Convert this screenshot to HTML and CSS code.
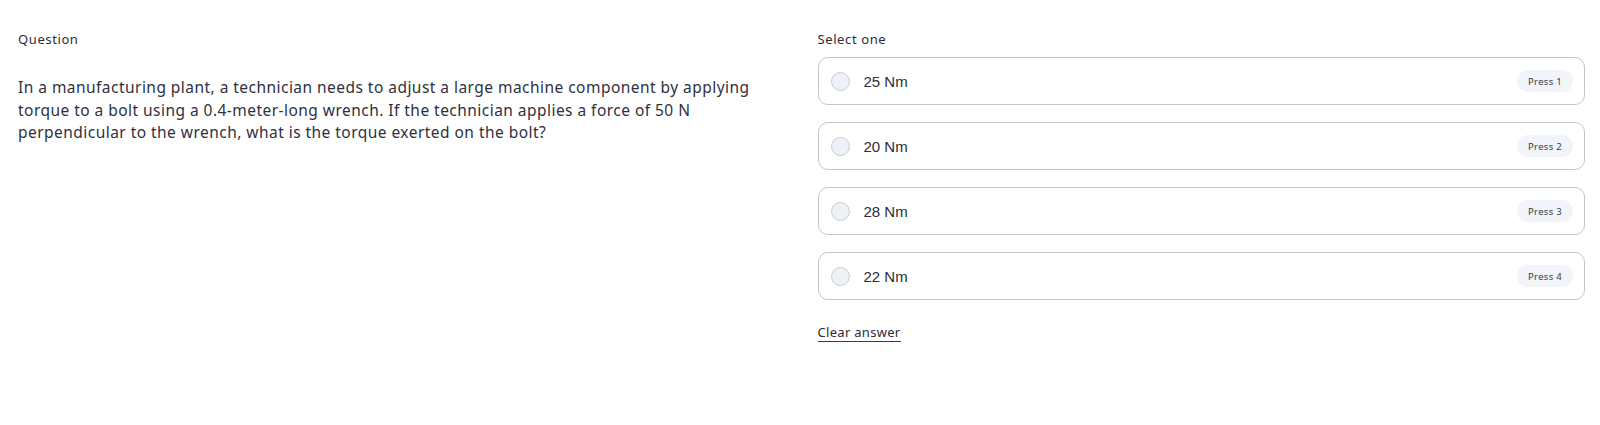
FILE: index.html
```html
<!DOCTYPE html>
<html lang="en">
<head>
<meta charset="utf-8">
<title>Question</title>
<link rel="stylesheet" href="styles.css">
</head>
<body>
<main class="layout">
  <section class="question">
    <div class="label">Question</div>
    <p class="prompt">In a manufacturing plant, a technician needs to adjust a large machine component by applying torque to a bolt using a 0.4-meter-long wrench. If the technician applies a force of 50 N perpendicular to the wrench, what is the torque exerted on the bolt?</p>
  </section>
  <section class="answers">
    <div class="label">Select one</div>
    <div class="options">
      <label class="option"><span class="radio"></span><span class="option-text">25 Nm</span><span class="badge">Press 1</span></label>
      <label class="option"><span class="radio"></span><span class="option-text">20 Nm</span><span class="badge">Press 2</span></label>
      <label class="option"><span class="radio"></span><span class="option-text">28 Nm</span><span class="badge">Press 3</span></label>
      <label class="option"><span class="radio"></span><span class="option-text">22 Nm</span><span class="badge">Press 4</span></label>
    </div>
    <div class="clear-row"><span class="clear">Clear answer</span></div>
  </section>
</main>
</body>
</html>
```
FILE: styles.css
```css
html, body {
  margin: 0;
  padding: 0;
  background: #ffffff;
}
body {
  font-family: "Noto Sans", "Open Sans", sans-serif;
  color: #2b2d3a;
}
.layout {
  display: grid;
  grid-template-columns: 1fr 1fr;
  column-gap: 32px;
  padding: 29px 15px 0 18px;
}
.label {
  font-size: 13px;
  line-height: 20px;
  letter-spacing: 0.6px;
  color: #2b2d3a;
}
.prompt {
  margin: 27px 0 0 0;
  font-size: 15.5px;
  line-height: 22.5px;
  letter-spacing: 0.46px;
  color: #2f3140;
}
.options {
  margin-top: 8px;
  display: flex;
  flex-direction: column;
  gap: 17px;
}
.option {
  display: flex;
  align-items: center;
  height: 46px;
  border: 1px solid #c3c5cb;
  border-radius: 10px;
  padding: 0 11px 0 12px;
  cursor: pointer;
}
.radio {
  width: 17px;
  height: 17px;
  border-radius: 50%;
  border: 1.5px solid #c9cbd1;
  background: #eef2f7;
  flex: none;
}
.option-text {
  margin-left: 14px;
  flex: 1;
  font-family: "Liberation Sans", Arial, sans-serif;
  font-size: 15px;
  color: #2b2d3a;
}
.badge {
  display: inline-flex;
  align-items: center;
  height: 22px;
  padding: 0 11px;
  border-radius: 11px;
  background: #f1f4f8;
  font-size: 9.5px;
  letter-spacing: 0.3px;
  color: #3a3c48;
}
.clear-row {
  margin-top: 20px;
}
.clear {
  display: inline-block;
  font-size: 13px;
  line-height: 16px;
  letter-spacing: 0.3px;
  padding-bottom: 1px;
  border-bottom: 1px solid #3a3c48;
  color: #2b2d3a;
  cursor: pointer;
}
```
